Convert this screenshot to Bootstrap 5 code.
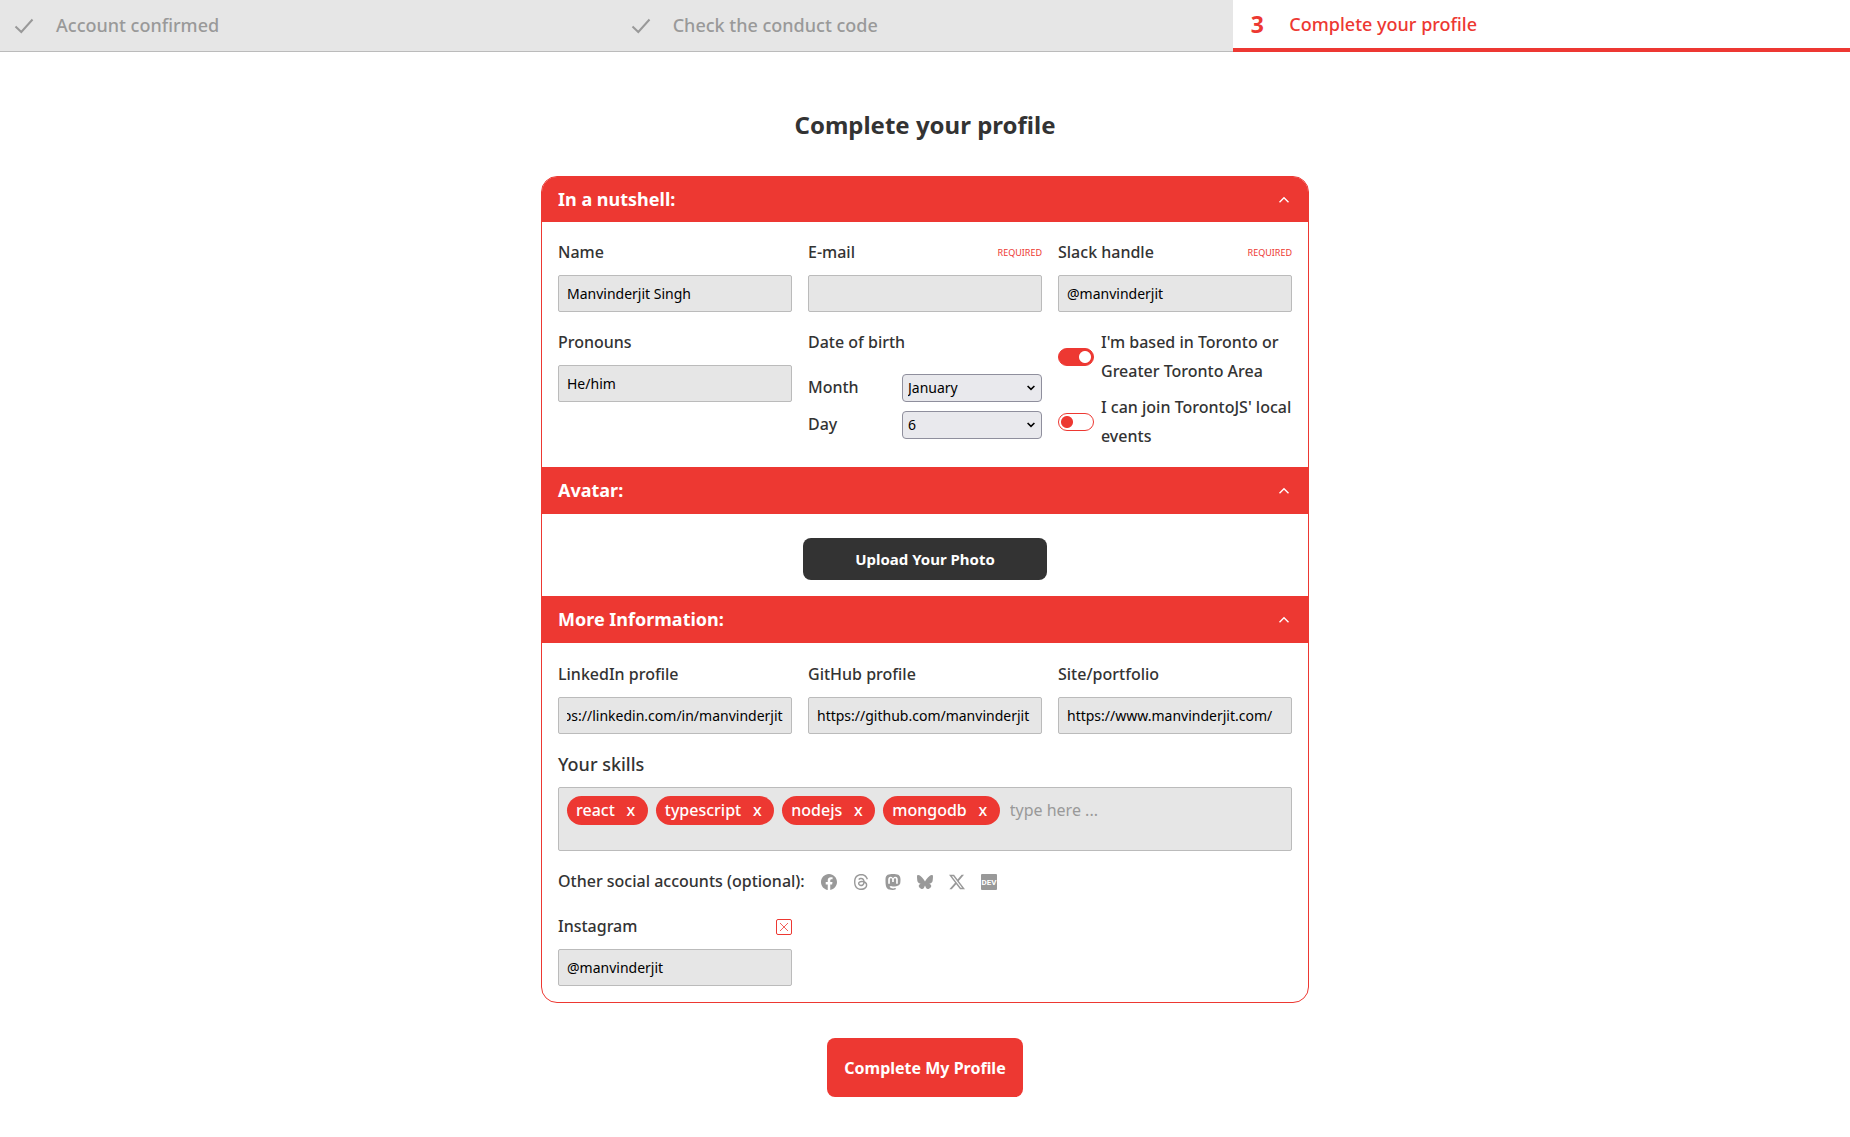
<!DOCTYPE html>
<html lang="en">
<head>
<meta charset="utf-8">
<meta name="viewport" content="width=device-width, initial-scale=1">
<title>Complete your profile</title>
<link href="https://cdn.jsdelivr.net/npm/bootstrap@5.3.0/dist/css/bootstrap.min.css" rel="stylesheet">
<style>
:root { --brand: #ed3832; --ink: #333; --field: #e6e6e6; --line: #bbb; --muted: #999; }
body { font-family: "Noto Sans", "Open Sans", sans-serif; font-size: 16px; font-weight: 500; line-height: 29px; color: var(--ink); }
.stepper { background: var(--field); }
.step-item { flex: 1 1 0; height: 52px; padding: 0 14px; font-size: 18px; color: var(--muted); border-bottom: 1px solid var(--line); }
.step-item.active { color: var(--brand); background: #fff; border-bottom: 4px solid var(--brand); }
.step-mark { width: 20px; margin-right: 22px; text-align: center; font-size: 23px; font-weight: 700; }
.page-title { font-size: 24px; line-height: 40px; font-weight: 700; margin: 53px 0 31px; }
.profile { max-width: 768px; border: 1px solid var(--brand); border-radius: 16px; overflow: hidden; }
.section-toggle { background: var(--brand); color: #fff; border: 0; padding: 9px 16px; font-size: 18px; font-weight: 700; height: 47px; }
.first-toggle { height: 45px; padding: 8px 16px; }
.section-toggle.collapsed svg { transform: rotate(180deg); }
.field-grid { display: grid; grid-template-columns: repeat(3, minmax(0, 1fr)); gap: 16px; }
.toggle-list { gap: 7px; }
.more-body { padding: 17px 16px 16px; }
.skills-label { font-size: 18px; }
.required-tag { font-size: 9px; font-weight: 400; color: var(--brand); }
.form-control.field { height: 37px; padding: 0 8px; font-size: 14px; font-weight: 400; line-height: 20px; color: #000; background: var(--field); border: 1px solid var(--line); border-radius: 2px; }
.form-select.field { width: 140px; height: 28px; padding: 0 24px 0 5px; font-size: 14px; line-height: 20px; color: #000; background-color: #e9e9ed; border: 1px solid #8f8f9d; border-radius: 4px; background-position: right 6px center; background-size: 8px 8px; background-image: url("data:image/svg+xml,%3csvg xmlns='http://www.w3.org/2000/svg' viewBox='0 0 8 8'%3e%3cpath fill='none' stroke='%23000' stroke-width='1.6' d='M.6 2 4 5.4 7.4 2'/%3e%3c/svg%3e"); }
.form-check-input.toggle { flex: none; width: 36px; height: 18px; margin: 0 7px 0 0; border: 1px solid var(--brand); border-radius: 9px; background: radial-gradient(circle at 8px 8px, var(--brand) 5.5px, transparent 6.5px) #fff; }
.form-check-input.toggle:checked { background: radial-gradient(circle at 26px 8px, #fff 5.5px, transparent 6.5px) var(--brand); }
.upload { width: 244px; height: 42px; color: #fff; background: var(--ink); border-radius: 8px; font-size: 15px; font-weight: 700; }
.skills-box { min-height: 64px; padding: 8px; background: var(--field); border: 1px solid var(--line); border-radius: 2px; }
.chip { padding: 0 9px; color: #fff; background: var(--brand); border-radius: 15px; }
.chip button { width: 16px; margin-left: 8px; padding: 0; border: 0; background: none; color: inherit; font-weight: 500; line-height: 29px; }
.skill-entry { min-width: 0; height: 29px; padding: 0 2px; border: 0; background: none; outline: 0; }
.skill-entry::placeholder { color: var(--muted); opacity: 1; }
.social button { display: flex; padding: 0; border: 0; background: none; color: var(--muted); }
.remove { display: flex; width: 16px; height: 16px; padding: 2px; border: 1px solid var(--brand); border-radius: 2px; background: none; color: var(--brand); }
.submit { height: 59px; padding: 0 16px; margin: 35px 0 40px; color: #fff; background: var(--brand); border-radius: 8px; font-size: 16px; font-weight: 700; }
</style>
</head>
<body>
<ol class="stepper d-flex list-unstyled mb-0">
  <li class="step-item d-flex align-items-center"><span class="step-mark d-flex justify-content-center"><svg width="20" height="16" viewBox="0 0 20 16" fill="none" stroke="currentColor" stroke-width="2"><path d="M1.500 8.500 7.300 14 18.500 1.500"/></svg></span>Account confirmed</li>
  <li class="step-item d-flex align-items-center"><span class="step-mark d-flex justify-content-center"><svg width="20" height="16" viewBox="0 0 20 16" fill="none" stroke="currentColor" stroke-width="2"><path d="M1.500 8.500 7.300 14 18.500 1.500"/></svg></span>Check the conduct code</li>
  <li class="step-item active d-flex align-items-center" aria-current="step"><span class="step-mark">3</span>Complete your profile</li>
</ol>

<main class="d-flex flex-column align-items-center">
  <h1 class="page-title">Complete your profile</h1>
  <form id="profile-form" class="profile w-100">
    <h2 class="m-0 d-flex"><button type="button" class="section-toggle first-toggle w-100 d-flex justify-content-between align-items-center" data-bs-toggle="collapse" data-bs-target="#nutshell" aria-expanded="true">In a nutshell:
      <svg width="16" height="16" viewBox="0 0 16 16" fill="none" stroke="currentColor" stroke-width="1.4"><path d="M3.500 10.300 8 5.800l4.500 4.500"/></svg></button></h2>
    <div id="nutshell" class="collapse show">
      <div class="field-grid p-3">
        <div>
          <label class="d-block mb-2" for="name">Name</label>
          <input class="form-control field" id="name" value="Manvinderjit Singh">
        </div>
        <div>
          <label class="d-flex justify-content-between mb-2" for="email">E-mail <span class="required-tag">REQUIRED</span></label>
          <input class="form-control field" id="email" type="email">
        </div>
        <div>
          <label class="d-flex justify-content-between mb-2" for="slack">Slack handle <span class="required-tag">REQUIRED</span></label>
          <input class="form-control field" id="slack" value="@manvinderjit">
        </div>
        <div>
          <label class="d-block mb-2" for="pronouns">Pronouns</label>
          <input class="form-control field" id="pronouns" value="He/him">
        </div>
        <div>
          <div class="mb-3">Date of birth</div>
          <div class="d-flex justify-content-between align-items-center mb-2"><label for="month">Month</label>
            <select class="form-select field" id="month"><option>January</option><option>February</option><option>March</option></select></div>
          <div class="d-flex justify-content-between align-items-center"><label for="day">Day</label>
            <select class="form-select field" id="day"><option>6</option><option>7</option><option>8</option></select></div>
        </div>
        <div class="toggle-list d-flex flex-column">
          <div class="d-flex align-items-center"><input class="form-check-input toggle" type="checkbox" role="switch" id="based" checked><label for="based">I'm based in Toronto or Greater Toronto Area</label></div>
          <div class="d-flex align-items-center"><input class="form-check-input toggle" type="checkbox" role="switch" id="local"><label for="local">I can join TorontoJS' local events</label></div>
        </div>
      </div>
    </div>

    <h2 class="m-0 d-flex"><button type="button" class="section-toggle w-100 d-flex justify-content-between align-items-center" data-bs-toggle="collapse" data-bs-target="#avatar" aria-expanded="true">Avatar:
      <svg width="16" height="16" viewBox="0 0 16 16" fill="none" stroke="currentColor" stroke-width="1.4"><path d="M3.500 10.300 8 5.800l4.500 4.500"/></svg></button></h2>
    <div id="avatar" class="collapse show">
      <div class="d-flex justify-content-center px-3 pt-4 pb-3"><button type="button" class="btn upload">Upload Your Photo</button></div>
    </div>

    <h2 class="m-0 d-flex"><button type="button" class="section-toggle w-100 d-flex justify-content-between align-items-center" data-bs-toggle="collapse" data-bs-target="#more" aria-expanded="true">More Information:
      <svg width="16" height="16" viewBox="0 0 16 16" fill="none" stroke="currentColor" stroke-width="1.4"><path d="M3.500 10.300 8 5.800l4.500 4.500"/></svg></button></h2>
    <div id="more" class="collapse show">
      <div class="more-body d-flex flex-column gap-3">
        <div class="field-grid">
          <div><label class="d-block mb-2" for="linkedin">LinkedIn profile</label><input class="form-control field" id="linkedin" value="https://linkedin.com/in/manvinderjit"></div>
          <div><label class="d-block mb-2" for="github">GitHub profile</label><input class="form-control field" id="github" value="https://github.com/manvinderjit"></div>
          <div><label class="d-block mb-2" for="site">Site/portfolio</label><input class="form-control field" id="site" value="https://www.manvinderjit.com/"></div>
        </div>
        <div>
          <label class="skills-label d-block mb-2" for="skill">Your skills</label>
          <div class="skills-box d-flex flex-wrap align-items-start gap-2">
            <span class="chip">react<button type="button" aria-label="Remove react">x</button></span>
            <span class="chip">typescript<button type="button" aria-label="Remove typescript">x</button></span>
            <span class="chip">nodejs<button type="button" aria-label="Remove nodejs">x</button></span>
            <span class="chip">mongodb<button type="button" aria-label="Remove mongodb">x</button></span>
            <input class="skill-entry flex-fill" id="skill" placeholder="type here ...">
          </div>
        </div>
        <div class="social d-flex align-items-center gap-3">
          <span>Other social accounts (optional):</span>
          <button type="button" aria-label="Facebook"><svg width="16" height="16" viewBox="0 0 16 16" fill="currentColor"><path d="M16 8.049c0-4.446-3.582-8.05-8-8.05C3.580 0-.002 3.603-.002 8.050c0 4.017 2.926 7.347 6.750 7.951v-5.625h-2.030V8.050H6.750V6.275c0-2.017 1.195-3.131 3.022-3.131.876 0 1.791.157 1.791.157v1.980h-1.009c-.993 0-1.303.621-1.303 1.258v1.510h2.218l-.354 2.326H9.250V16c3.824-.604 6.750-3.934 6.750-7.951z"/></svg></button>
          <button type="button" aria-label="Threads"><svg width="16" height="16" viewBox="0 0 16 16" fill="currentColor"><path d="M6.321 6.016c-.27-.18-1.166-.802-1.166-.802.756-1.081 1.753-1.502 3.132-1.502.975 0 1.803.327 2.394.948s.928 1.509 1.005 2.644q.492.207.905.484c1.109.745 1.719 1.860 1.719 3.137 0 2.716-2.226 5.075-6.256 5.075C4.594 16 1 13.987 1 7.994 1 2.034 4.482 0 8.044 0 9.690 0 13.550.243 15 5.036l-1.360.353C12.516 1.974 10.163 1.430 8.006 1.430c-3.565 0-5.582 2.171-5.582 6.790 0 4.143 2.254 6.343 5.630 6.343 2.777 0 4.847-1.443 4.847-3.556 0-1.438-1.208-2.127-1.270-2.127-.236 1.234-.868 3.310-3.644 3.310-1.618 0-3.013-1.118-3.013-2.582 0-2.090 1.984-2.847 3.550-2.847.586 0 1.294.040 1.663.114 0-.637-.540-1.728-1.900-1.728-1.250 0-1.566.405-1.967.868ZM8.716 8.190c-2.040 0-2.304.870-2.304 1.416 0 .878 1.043 1.168 1.600 1.168 1.020 0 2.067-.282 2.232-2.423a6.200 6.200 0 0 0-1.528-.161"/></svg></button>
          <button type="button" aria-label="Mastodon"><svg width="16" height="16" viewBox="0 0 16 16" fill="currentColor"><path d="M11.190 12.195c2.016-.24 3.770-1.475 3.990-2.603.348-1.778.320-4.339.320-4.339 0-3.470-2.286-4.488-2.286-4.488C12.062.238 10.083.017 8.027 0h-.050C5.920.017 3.942.238 2.790.765c0 0-2.285 1.017-2.285 4.488l-.002.662c-.004.640-.007 1.350.011 2.091.083 3.394.626 6.740 3.780 7.570 1.454.383 2.703.463 3.709.408 1.823-.100 2.847-.647 2.847-.647l-.060-1.317s-1.303.410-2.767.360c-1.450-.050-2.980-.156-3.215-1.928a4 4 0 0 1-.033-.496s1.424.346 3.228.428c1.103.050 2.137-.064 3.188-.189zm1.613-2.470H11.130v-4.080c0-.859-.364-1.295-1.091-1.295-.804 0-1.207.517-1.207 1.541v2.233H7.168V5.890c0-1.024-.403-1.541-1.207-1.541-.727 0-1.091.436-1.091 1.296v4.079H3.197V5.522q0-1.288.660-2.046c.456-.505 1.052-.764 1.793-.764.856 0 1.504.328 1.933.983L8 4.390l.417-.695c.429-.655 1.077-.983 1.934-.983.740 0 1.336.259 1.791.764q.662.757.661 2.046z"/></svg></button>
          <button type="button" aria-label="Bluesky"><svg width="16" height="16" viewBox="0 0 16 16" fill="currentColor"><path d="M3.468 1.948C5.303 3.325 7.276 6.118 8 7.616c.725-1.498 2.698-4.290 4.532-5.668C13.855.955 16 .186 16 2.632c0 .489-.280 4.105-.444 4.692-.572 2.040-2.653 2.561-4.504 2.246 3.236.551 4.060 2.375 2.281 4.200-3.376 3.464-4.852-.870-5.230-1.980-.070-.204-.103-.300-.103-.218 0-.081-.033.014-.102.218-.379 1.110-1.855 5.444-5.231 1.980-1.778-1.825-.955-3.650 2.280-4.200-1.850.315-3.932-.205-4.503-2.246C.280 6.737 0 3.120 0 2.632 0 .186 2.145.955 3.468 1.948"/></svg></button>
          <button type="button" aria-label="X"><svg width="16" height="16" viewBox="0 0 16 16" fill="currentColor"><path d="M12.600.750h2.454l-5.360 6.142L16 15.250h-4.937l-3.867-5.070-4.425 5.070H.316l5.733-6.570L0 .750h5.063l3.495 4.633L12.601.750Zm-.860 13.028h1.360L4.323 2.145H2.865z"/></svg></button>
          <button type="button" aria-label="DEV"><svg width="16" height="16" viewBox="0 0 16 16"><rect width="16" height="16" rx="1" fill="currentColor"/><text x="8" y="11" text-anchor="middle" font-family="Roboto, sans-serif" font-size="8" font-weight="700" fill="#fff">DEV</text></svg></button>
        </div>
        <div class="field-grid">
          <div>
            <div class="d-flex justify-content-between align-items-center mb-2"><label for="instagram">Instagram</label>
              <button type="button" class="remove" aria-label="Remove Instagram"><svg width="10" height="10" viewBox="0 0 10 10" fill="none" stroke="currentColor" stroke-width=".8"><path d="M1 1l8 8M9 1 1 9"/></svg></button></div>
            <input class="form-control field" id="instagram" value="@manvinderjit">
          </div>
        </div>
      </div>
    </div>
  </form>
  <button type="submit" form="profile-form" class="btn submit">Complete My Profile</button>
</main>
<script src="https://cdn.jsdelivr.net/npm/bootstrap@5.3.0/dist/js/bootstrap.bundle.min.js"></script>
<script>
  // Show the end of a long profile address rather than its start.
  const linkedin = document.getElementById('linkedin');
  linkedin.scrollLeft = linkedin.scrollWidth;
</script>
</body>
</html>
